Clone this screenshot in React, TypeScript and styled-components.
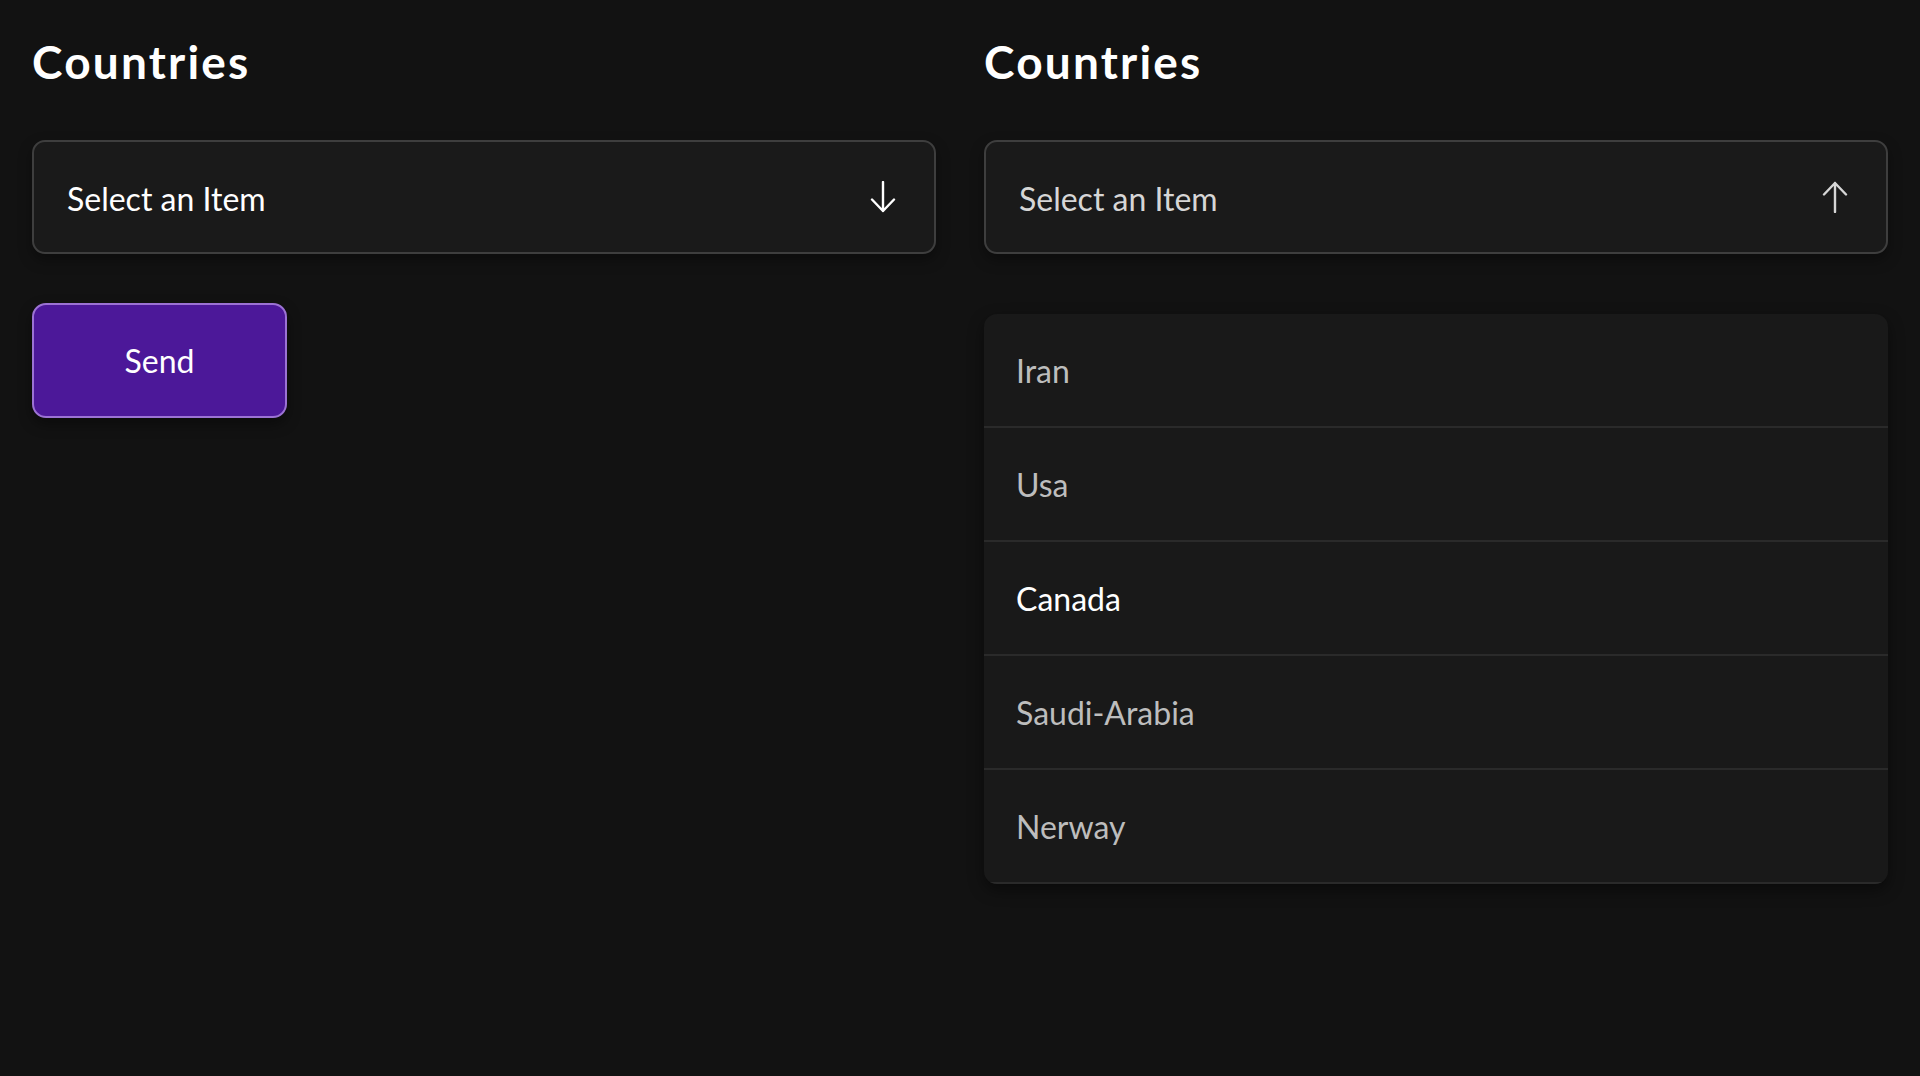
import React, { useState } from "react";
import styled, { createGlobalStyle } from "styled-components";

const GlobalStyle = createGlobalStyle`
  html, body {
    margin: 0;
    padding: 0;
    background: #121212;
    min-height: 100%;
  }
  body {
    font-family: Lato, "Noto Sans", "Liberation Sans", sans-serif;
    color: #ffffff;
  }
  * {
    box-sizing: border-box;
  }
`;

const Page = styled.main`
  min-height: 1076px;
  display: grid;
  grid-template-columns: 1fr 1fr;
  column-gap: 48px;
  align-items: start;
  padding: 0 32px;
`;

const Column = styled.section`
  display: flex;
  flex-direction: column;
`;

const Title = styled.h2`
  margin: 34px 0 50px;
  font-size: 46px;
  font-weight: 700;
  line-height: 56px;
  letter-spacing: 2.2px;
  color: #ffffff;
`;

const SelectBox = styled.button<{ $open: boolean }>`
  display: flex;
  align-items: center;
  justify-content: space-between;
  width: 100%;
  height: 114px;
  padding: 0 38px 0 33px;
  background: #1a1a1a;
  border: 2px solid #3e3e3e;
  border-radius: 13px;
  box-shadow: 0 6px 14px rgba(0, 0, 0, 0.35);
  font-family: inherit;
  font-size: 32px;
  color: ${(p) => (p.$open ? "#d6d6d6" : "#ffffff")};
  cursor: pointer;
  text-align: left;
`;

const Placeholder = styled.span`
  padding-top: 2px;
`;

const ArrowIcon = styled.svg<{ $up: boolean }>`
  width: 26px;
  height: 32px;
  margin-top: -1px;
  transform: ${(p) => (p.$up ? "rotate(180deg)" : "none")};
`;

const SendButton = styled.button`
  margin-top: 49px;
  width: 255px;
  height: 115px;
  background: #4c1899;
  border: 2px solid #9c72d4;
  border-radius: 14px;
  box-shadow: 0 6px 14px rgba(0, 0, 0, 0.4);
  font-family: inherit;
  font-size: 32px;
  color: #ffffff;
  cursor: pointer;
`;

const List = styled.ul`
  list-style: none;
  margin: 60px 0 0;
  padding: 0;
  background: #191919;
  border-radius: 13px;
  overflow: hidden;
  box-shadow: 0 6px 16px rgba(0, 0, 0, 0.45);
`;

const Option = styled.li<{ $active: boolean }>`
  display: flex;
  align-items: center;
  height: 114px;
  padding: 0 32px;
  border-bottom: 2px solid #2a2a2a;
  font-size: 32px;
  color: ${(p) => (p.$active ? "#ffffff" : "#bdbdbd")};
  cursor: pointer;
`;

const countries = ["Iran", "Usa", "Canada", "Saudi-Arabia", "Nerway"];

const Arrow: React.FC<{ up: boolean }> = ({ up }) => (
  <ArrowIcon $up={up} viewBox="0 0 26 32" fill="none">
    <path
      d="M13 1v29M2 18.5l11 11.5 11-11.5"
      stroke="currentColor"
      strokeWidth="2.4"
      strokeLinecap="round"
      strokeLinejoin="round"
    />
  </ArrowIcon>
);

const Dropdown: React.FC<{ initialOpen: boolean; withButton?: boolean }> = ({
  initialOpen,
  withButton,
}) => {
  const [open, setOpen] = useState<boolean>(initialOpen);
  const [hover, setHover] = useState<string>("Canada");

  return (
    <Column>
      <Title>Countries</Title>
      <SelectBox $open={open} onClick={() => setOpen((prev) => !prev)}>
        <Placeholder>Select an Item</Placeholder>
        <Arrow up={open} />
      </SelectBox>
      {open && (
        <List>
          {countries.map((c) => (
            <Option
              key={c}
              $active={hover === c}
              onMouseEnter={() => setHover(c)}
            >
              {c}
            </Option>
          ))}
        </List>
      )}
      {withButton && !open && <SendButton>Send</SendButton>}
    </Column>
  );
};

export default function App() {
  return (
    <>
      <GlobalStyle />
      <Page>
        <Dropdown initialOpen={false} withButton />
        <Dropdown initialOpen={true} />
      </Page>
    </>
  );
}
